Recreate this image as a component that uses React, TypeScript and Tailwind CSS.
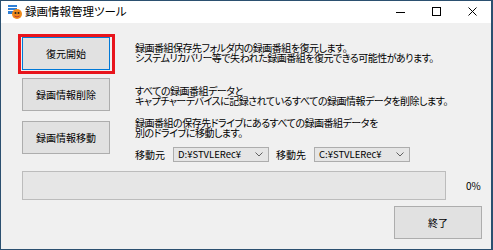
const jp = "font-['Noto_Sans_CJK_JP','Noto_Sans',sans-serif] [font-feature-settings:'palt']";

function WinButton({ label, focused }: { label: string; focused?: boolean }) {
  return (
    <div
      className={`w-[88px] h-[33px] flex items-center justify-center bg-[#e1e1e1] border text-[10px] text-black ${
        focused ? "border-[#0078d7]" : "border-[#adadad]"
      }`}
    >
      {label}
    </div>
  );
}

function Select({ value }: { value: string }) {
  return (
    <div className="w-[96px] h-[15px] flex items-center justify-between bg-[#e5e5e5] border border-[#adadad] pl-[4px] pr-[5px]">
      <span className="text-[9.5px] leading-none text-black tracking-normal">{value}</span>
      <svg width="8" height="5" viewBox="0 0 8 5">
        <path d="M0.5 0.5 L4 4 L7.5 0.5" fill="none" stroke="#606060" strokeWidth="1" />
      </svg>
    </div>
  );
}

function AppIcon() {
  return (
    <svg width="16" height="16" viewBox="0 0 16 16">
      <rect x="1" y="1" width="9" height="9" fill="#2f7fd6" />
      <rect x="1" y="3" width="9" height="1" fill="#ffffff" />
      <rect x="1" y="6" width="9" height="1" fill="#ffffff" />
      <circle cx="10" cy="10" r="5" fill="#f08a1c" />
      <circle cx="8.5" cy="9" r="1" fill="#222" />
      <circle cx="11.5" cy="9" r="1" fill="#222" />
      <path d="M7.5 12 Q10 14 12.5 12" fill="none" stroke="#c0392b" strokeWidth="1" />
    </svg>
  );
}

export default function App() {
  return (
    <div className={`w-[493px] h-[250px] flex flex-col border border-r-2 border-[#2b5070] ${jp}`}>
      <div className="h-[22px] shrink-0 bg-white flex items-center">
        <div className="pl-[6px] flex items-center gap-[2px]">
          <AppIcon />
          <span className="text-[11.5px] text-black">録画情報管理ツール</span>
        </div>
        <div className="ml-auto flex h-full">
          <div className="w-[36px] flex items-center justify-center">
            <svg width="10" height="10" viewBox="0 0 10 10">
              <path d="M0 5.5 H9" stroke="#000" strokeWidth="1" />
            </svg>
          </div>
          <div className="w-[36px] flex items-center justify-center">
            <svg width="10" height="10" viewBox="0 0 10 10">
              <rect x="0.5" y="0.5" width="8" height="8" fill="none" stroke="#000" strokeWidth="1" />
            </svg>
          </div>
          <div className="w-[36px] flex items-center justify-center">
            <svg width="10" height="10" viewBox="0 0 10 10">
              <path d="M0.5 0.5 L8.5 8.5 M8.5 0.5 L0.5 8.5" stroke="#000" strokeWidth="1" />
            </svg>
          </div>
        </div>
      </div>

      <div className="flex-1 bg-[#f0f0f0] pl-[21px] pt-[14px] text-black">
        <div className="flex">
          <div className="flex flex-col w-[88px] shrink-0">
            <div className="relative">
              <WinButton label="復元開始" focused />
              <div className="absolute -left-[4px] -top-[3px] -right-[5px] -bottom-[4px] border-[3px] border-[#e8141c]" />
            </div>
            <div className="mt-[8px]">
              <WinButton label="録画情報削除" />
            </div>
            <div className="mt-[10px]">
              <WinButton label="録画情報移動" />
            </div>
          </div>

          <div className="ml-[25px] pt-[6px] flex flex-col text-[10px] leading-[10px] tracking-[-0.5px] whitespace-nowrap">
            <div>
              <div>録画番組保存先フォルダ内の録画番組を復元します。</div>
              <div>システムリカバリー等で失われた録画番組を復元できる可能性があります。</div>
            </div>
            <div className="mt-[23px]">
              <div>すべての録画番組データと</div>
              <div>キャプチャーデバイスに記録されているすべての録画情報データを削除します。</div>
            </div>
            <div className="mt-[12px]">
              <div>録画番組の保存先ドライブにあるすべての録画番組データを</div>
              <div>別のドライブに移動します。</div>
            </div>
            <div className="mt-[9px] flex items-center">
              <span className="tracking-normal">移動元</span>
              <div className="ml-[8px]">
                <Select value="D:¥STVLERec¥" />
              </div>
              <span className="ml-[7px] tracking-normal">移動先</span>
              <div className="ml-[8px]">
                <Select value="C:¥STVLERec¥" />
              </div>
            </div>
          </div>
        </div>

        <div className="mt-[9px] flex items-center">
          <div className="w-[424px] h-[29px] bg-[#e6e6e6] border border-[#bcbcbc]" />
          <span className="ml-[20px] text-[10px]">0%</span>
        </div>

        <div className="mt-[6px] ml-[372px]">
          <WinButton label="終了" />
        </div>
      </div>
    </div>
  );
}
